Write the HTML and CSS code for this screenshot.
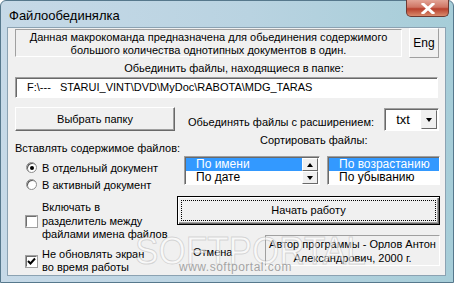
FILE: index.html
```html
<!DOCTYPE html>
<html lang="ru">
<head>
    <meta charset="UTF-8">
    <title>Файлообединялка</title>
    <link rel="stylesheet" href="styles.css">
</head>
<body>
    <div class="window">
        <div class="titlebar">
            <span class="title">Файлообединялка</span>
            <div class="close">
                <svg width="18" height="11" viewBox="0 0 18 11"><path d="M4 1 L14 10 M14 1 L4 10" stroke="#fff" stroke-width="3" stroke-linecap="square"/></svg>
            </div>
        </div>
        <div class="client">
            <div class="top-row">
                <div class="desc">Данная макрокоманда предназначена для обьединения содержимого<br>большого количества однотипных документов в один.</div>
                <button class="btn eng">Eng</button>
            </div>
            <div class="folder-label">Обьединить файлы, находящиеся в папке:</div>
            <div class="path">F:\---&nbsp;&nbsp; STARUI_VINT\DVD\MyDoc\RABOTA\MDG_TARAS</div>

            <div class="lower">
                <div class="left-col">
                    <button class="btn pick">Выбрать папку</button>
                    <div class="insert-label">Вставлять содержимое файлов:</div>
                    <div class="option first">
                        <span class="radio checked"></span>
                        <span>В отдельный документ</span>
                    </div>
                    <div class="option">
                        <span class="radio"></span>
                        <span>В активный документ</span>
                    </div>
                    <div class="check-row first">
                        <span class="checkbox"></span>
                        <span class="check-text">Включать в<br>разделитель между<br>файлами имена файлов</span>
                    </div>
                    <div class="check-row">
                        <span class="checkbox checked">
                            <svg width="9" height="9" viewBox="0 0 9 9"><path d="M1 4 L3.5 6.5 L8 1.5" stroke="#000" stroke-width="2" fill="none"/></svg>
                        </span>
                        <span class="check-text">Не обновлять экран<br>во время работы</span>
                    </div>
                </div>

                <div class="right-col">
                    <div class="ext-row">
                        <span>Обьединять файлы с расширением:</span>
                        <div class="combo">
                            <span class="combo-value">txt</span>
                            <span class="combo-btn"><span class="arrow-down"></span></span>
                        </div>
                    </div>
                    <div class="sort-label">Сортировать файлы:</div>
                    <div class="lists">
                        <div class="listbox sort-by">
                            <div class="items">
                                <div class="item selected">По имени</div>
                                <div class="item">По дате</div>
                            </div>
                            <div class="scroll">
                                <span class="sbtn"><span class="arrow-up"></span></span>
                                <span class="sbtn"><span class="arrow-down"></span></span>
                            </div>
                        </div>
                        <div class="listbox order">
                            <div class="items">
                                <div class="item selected">По возрастанию</div>
                                <div class="item">По убыванию</div>
                            </div>
                        </div>
                    </div>
                    <button class="btn start"><span class="focus">Начать работу</span></button>
                    <div class="bottom-row">
                        <span class="cancel">Отмена</span>
                        <div class="author">Автор программы - Орлов Антон<br>Александрович, 2000 г.</div>
                    </div>
                </div>
            </div>
        </div>
        <div class="watermark">SOFTPORTAL</div>
        <div class="watermark-url">www.softportal.com</div>
    </div>
</body>
</html>
```

FILE: styles.css
```css
body {
    margin: 0;
    width: 454px;
    height: 283px;
    overflow: hidden;
    font-family: "Liberation Sans", Arial, sans-serif;
    font-size: 11px;
    color: #000;
    white-space: nowrap;
}
.window {
    position: relative;
    height: 283px;
    box-sizing: border-box;
    background: linear-gradient(90deg, #c6d9e7 0%, #b9d3e1 55%, #a6cdd8 100%);
    border: 1px solid #56788c;
    border-radius: 6px 6px 0 0;
    padding: 0 7px 6px 6px;
    display: flex;
    flex-direction: column;
}
.titlebar {
    height: 26px;
    display: flex;
    align-items: flex-start;
    justify-content: space-between;
}
.title {
    font-size: 13px;
    margin-top: 7px;
    margin-left: 2px;
}
.close {
    width: 43px;
    height: 17px;
    margin-right: -3px;
    margin-top: -1px;
    box-sizing: border-box;
    border: 1px solid #6d3a33;
    border-top: none;
    border-radius: 0 0 5px 5px;
    background: linear-gradient(180deg, #e3a496 0%, #cf7564 45%, #b8402d 55%, #d98a6c 100%);
    display: flex;
    align-items: center;
    justify-content: center;
}
.client {
    flex: 1;
    background: #f0f0f0;
    border: 1px solid #8ba2b2;
    padding: 1px 6px 0 7px;
}
.btn {
    font-family: inherit;
    font-size: 11px;
    background: #f0f0f0;
    border: 1px solid;
    border-color: #fff #696969 #696969 #fff;
    box-shadow: inset -1px -1px 0 #a0a0a0;
    padding: 0;
    color: #000;
}
.top-row {
    display: flex;
    gap: 7px;
}
.desc {
    width: 387px;
    height: 28px;
    box-sizing: border-box;
    border: 1px solid;
    border-color: #a0a0a0 #fff #fff #a0a0a0;
    text-align: center;
    line-height: 13px;
    padding-top: 1px;
}
.eng {
    width: 30px;
    height: 30px;
    margin-top: -1px;
    border-color: #fff #a0a0a0 #a0a0a0 #fff;
    box-shadow: none;
    font-size: 12px;
}
.folder-label {
    text-align: center;
    padding-left: 14px;
    line-height: 16px;
    margin-top: 2px;
}
.path {
    width: 423px;
    height: 21px;
    box-sizing: border-box;
    background: #fff;
    border: 1px solid;
    border-color: #a0a0a0 #fff #fff #a0a0a0;
    box-shadow: inset 1px 1px 0 #696969;
    padding-left: 11px;
    line-height: 19px;
    margin-top: 1px;
}
.lower {
    display: grid;
    grid-template-columns: 160px 263px;
    column-gap: 2px;
    margin-top: 9px;
}
.pick {
    width: 160px;
    height: 24px;
}
.insert-label {
    margin-top: 9px;
    line-height: 16px;
}
.option {
    display: flex;
    align-items: center;
    gap: 5px;
    padding-left: 11px;
    height: 17px;
}
.option.first {
    margin-top: 3px;
}
.radio {
    width: 11px;
    height: 11px;
    box-sizing: border-box;
    border-radius: 50%;
    background: #fff;
    border: 1px solid #8c8c8c;
    box-shadow: inset 1px 1px 0 #5a5a5a;
    position: relative;
}
.radio.checked::after {
    content: "";
    position: absolute;
    left: 3px;
    top: 3px;
    width: 4px;
    height: 4px;
    border-radius: 50%;
    background: #000;
}
.check-row {
    display: flex;
    align-items: center;
    gap: 5px;
    padding-left: 11px;
    line-height: 13.5px;
    margin-top: 6px;
}
.check-row.first {
    margin-top: 8px;
}
.checkbox {
    width: 11px;
    height: 11px;
    flex: none;
    box-sizing: border-box;
    background: #fff;
    border: 1px solid;
    border-color: #6e6e6e #fff #fff #6e6e6e;
    box-shadow: 0 0 0 1px #a0a0a0;
    display: flex;
    align-items: center;
    justify-content: center;
}
.ext-row {
    display: flex;
    align-items: center;
    justify-content: flex-end;
    gap: 10px;
    margin-top: 1px;
}
.ext-row > span {
    margin-top: 5px;
}
.combo {
    width: 55px;
    height: 23px;
    box-sizing: border-box;
    background: #fff;
    border: 1px solid;
    border-color: #a0a0a0 #fff #fff #a0a0a0;
    box-shadow: inset 1px 1px 0 #696969;
    display: flex;
    margin-right: 1px;
}
.combo-value {
    flex: 1;
    text-align: center;
    line-height: 21px;
    font-size: 13px;
}
.combo-btn {
    width: 16px;
    margin: 1px 1px 1px 0;
    background: #f0f0f0;
    border: 1px solid;
    border-color: #f0f0f0 #696969 #696969 #f0f0f0;
    box-sizing: border-box;
    display: flex;
    align-items: center;
    justify-content: center;
}
.arrow-down, .arrow-up {
    width: 0;
    height: 0;
    border-left: 3.5px solid transparent;
    border-right: 3.5px solid transparent;
}
.arrow-down {
    border-top: 4px solid #000;
}
.arrow-up {
    border-bottom: 4px solid #000;
}
.sort-label {
    line-height: 16px;
    margin-top: 1px;
    padding-left: 83px;
}
.lists {
    display: flex;
    gap: 7px;
    margin-top: 8px;
    padding-left: 7px;
}
.listbox {
    height: 29px;
    box-sizing: border-box;
    background: #fff;
    border: 1px solid;
    border-color: #a0a0a0 #fff #fff #a0a0a0;
    box-shadow: inset 1px 1px 0 #696969;
    display: flex;
    padding: 1px 0 0 1px;
}
.sort-by {
    width: 136px;
}
.order {
    width: 113px;
}
.items {
    flex: 1;
}
.item {
    height: 13px;
    line-height: 13px;
    padding-left: 10px;
    font-size: 12px;
}
.item.selected {
    background: #3399ff;
    color: #fff;
}
.scroll {
    width: 16px;
    display: flex;
    flex-direction: column;
    margin-right: 1px;
}
.sbtn {
    flex: 1;
    background: #f0f0f0;
    border: 1px solid;
    border-color: #fff #696969 #696969 #fff;
    display: flex;
    align-items: center;
    justify-content: center;
}
.start {
    display: block;
    width: 263px;
    height: 29px;
    margin-top: 11px;
    border: 1px solid #000;
    box-shadow: inset 1px 1px 0 #fff, inset -1px -1px 0 #696969, inset -2px -2px 0 #a0a0a0;
    padding: 3px;
}
.focus {
    display: block;
    height: 100%;
    box-sizing: border-box;
    border: 1px dotted #000;
    line-height: 19px;
}
.bottom-row {
    display: flex;
    align-items: flex-start;
    justify-content: space-between;
    margin-top: 10px;
}
.cancel {
    margin-left: 16px;
    margin-top: 11px;
}
.author {
    width: 175px;
    height: 31px;
    box-sizing: border-box;
    border: 1px solid;
    border-color: #a0a0a0 #fff #fff #a0a0a0;
    text-align: center;
    line-height: 14px;
    padding-top: 1px;
}
.watermark {
    position: absolute;
    left: 134px;
    top: 230px;
    font-size: 39px;
    line-height: 39px;
    transform: scaleX(0.9);
    transform-origin: left top;
    color: rgba(255, 255, 255, 0.6);
    -webkit-text-stroke: 1px rgba(150, 150, 150, 0.35);
    pointer-events: none;
}
.watermark-url {
    position: absolute;
    left: 178px;
    top: 259px;
    font-size: 12px;
    color: rgba(110, 110, 110, 0.6);
    letter-spacing: 0.5px;
}
```
